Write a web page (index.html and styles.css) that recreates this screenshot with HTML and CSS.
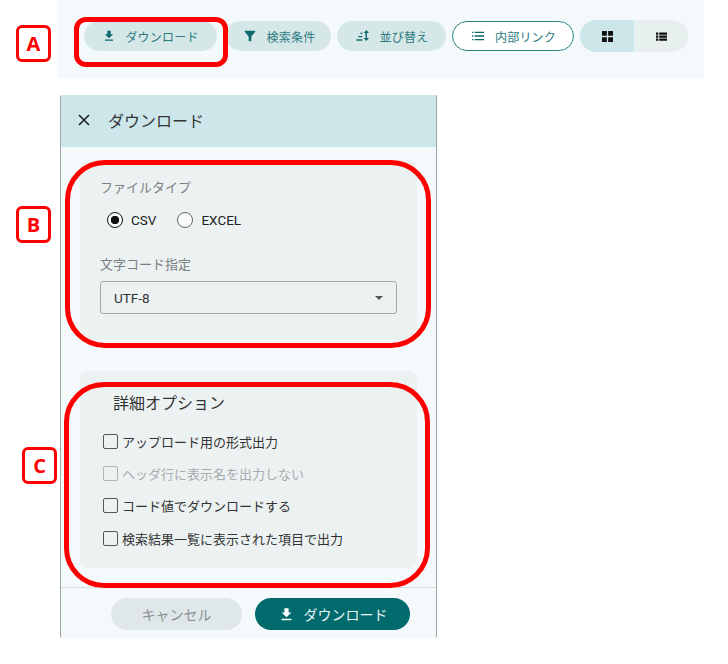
FILE: index.html
```html
<!DOCTYPE html>
<html lang="ja">
<head>
<meta charset="utf-8">
<title>ダウンロード</title>
<link rel="stylesheet" href="styles.css">
</head>
<body>
<div class="page">
  <div class="toolbar">
    <button class="tbtn tbtn-dl"><svg class="ic" viewBox="0 0 24 24"><path d="M19 9h-4V3H9v6H5l7 7 7-7zM5 18v2h14v-2H5z"/></svg><span>ダウンロード</span></button>
    <button class="tbtn tbtn-search"><svg class="ic ic-l" viewBox="0 0 24 24"><path d="M4.2 5.6C6.2 8.2 10 13 10 13v6c0 .6.4 1 1 1h2c.6 0 1-.4 1-1v-6s3.700-4.800 5.800-7.400c.5-.7 0-1.600-.8-1.600H5c-.8 0-1.300.9-.8 1.600z"/></svg><span>検索条件</span></button>
    <button class="tbtn tbtn-sort"><svg class="ic ic-l" viewBox="0 0 24 24"><path d="M2 17h9v2H2zM5 12h6v2H5zM8 7h3v2H8zM16 5.500h2V15h3l-4 4.500-4-4.500h3z" transform="translate(0 0)"/><path d="M17 3l4 4.500h-3V12h-2V7.500h-3z"/></svg><span>並び替え</span></button>
    <button class="tbtn tbtn-link"><svg class="ic ic-l" viewBox="0 0 24 24"><path d="M3 5.500h2v2H3zM3 11h2v2H3zM3 16.500h2v2H3zM7 5.500h14v2H7zM7 11h14v2H7zM7 16.500h14v2H7z"/></svg><span>内部リンク</span></button>
    <div class="toggle">
      <div class="tog tog-on"><svg class="ic-tog" viewBox="0 0 12 12"><path d="M0 0h5.300v5.300H0zM6.700 0H12v5.300H6.700zM0 6.700h5.300V12H0zM6.700 6.700H12V12H6.700z"/></svg></div>
      <div class="tog"><svg class="ic-tog" viewBox="0 0 12 12"><path d="M0 1.500h2.500v2.500H0zM3.500 1.500H12v2.500H3.500zM0 4.800h2.500v2.500H0zM3.500 4.800H12v2.500H3.500zM0 8.100h2.500v2.500H0zM3.500 8.100H12v2.500H3.500z"/></svg></div>
    </div>
  </div>

  <div class="panel">
    <div class="phead">
      <svg class="close" viewBox="0 0 12 12"><path d="M1 1l10 10M11 1L1 11"/></svg>
      <span class="ptitle">ダウンロード</span>
    </div>
    <div class="pbody">
      <section class="card card-b">
        <div class="label">ファイルタイプ</div>
        <div class="radios">
          <div class="radio"><span class="rmark rmark-on"></span><span>CSV</span></div>
          <div class="radio"><span class="rmark"></span><span>EXCEL</span></div>
        </div>
        <div class="label label-2">文字コード指定</div>
        <div class="select"><span>UTF-8</span><span class="caret"></span></div>
      </section>
      <section class="card card-c">
        <div class="ctitle">詳細オプション</div>
        <div class="check"><span class="box"></span><span>アップロード用の形式出力</span></div>
        <div class="check check-off"><span class="box"></span><span>ヘッダ行に表示名を出力しない</span></div>
        <div class="check"><span class="box"></span><span>コード値でダウンロードする</span></div>
        <div class="check"><span class="box"></span><span>検索結果一覧に表示された項目で出力</span></div>
      </section>
    </div>
    <div class="pfoot">
      <button class="fbtn fbtn-cancel">キャンセル</button>
      <button class="fbtn fbtn-dl"><svg class="ic-f" viewBox="0 0 24 24"><path d="M19 9h-4V3H9v6H5l7 7 7-7zM5 18v2h14v-2H5z"/></svg><span>ダウンロード</span></button>
    </div>
  </div>

  <div class="mark mark-a">A</div>
  <div class="mark mark-b">B</div>
  <div class="mark mark-c">C</div>
  <div class="ring ring-a"></div>
  <div class="ring ring-b"></div>
  <div class="ring ring-c"></div>
</div>
</body>
</html>
```
FILE: styles.css
```css
* { box-sizing: border-box; }
html, body { margin: 0; padding: 0; background: #fff; }
body { font-family: Roboto, "Noto Sans CJK JP", sans-serif; }
.page { position: relative; width: 728px; height: 664px; overflow: hidden; padding-left: 57px; }

.toolbar { width: 647px; height: 78px; background: #f4f9fb; display: flex; align-items: center; padding-left: 27px; padding-bottom: 6px; }
button { font-family: inherit; border: 0; padding: 0; }
.tbtn { height: 30px; border-radius: 15px; background: #d5e8e7; color: #2a7a80; font-size: 12px; display: flex; align-items: center; justify-content: center; gap: 9px; letter-spacing: .2px; }
.tbtn-dl { width: 133px; margin-right: 9px; }
.tbtn-search { width: 105px; margin-right: 6px; }
.tbtn-sort { width: 109px; margin-right: 6px; }
.tbtn-link { width: 122px; margin-right: 6px; background: #fff; border: 1px solid #2c868c; }
.ic { width: 14px; height: 14px; fill: #0f6a70; flex: none; }
.ic-l { width: 16px; height: 16px; }
.toggle { display: flex; width: 108px; height: 32px; border-radius: 16px; overflow: hidden; }
.tog { flex: 1; display: flex; align-items: center; justify-content: center; background: #e8efef; }
.tog-on { background: #cde6e9; }
.ic-tog { width: 11px; height: 11px; fill: #111; }

.panel { width: 377px; height: 543px; margin: 17px 0 0 3px; background: #f4f9fb; border: 1px solid #a0a5a8; border-bottom: 0; border-radius: 2px; display: flex; flex-direction: column; }
.phead { height: 52px; flex: none; background: #cde6e9; display: flex; align-items: center; padding-left: 17px; gap: 18px; margin-top: -1px; padding-bottom: 3px; }
.close { width: 12px; height: 12px; fill: none; stroke: #222; stroke-width: 1.600; }
.ptitle { font-size: 16px; color: #333; }
.pbody { flex: 1; padding: 13px 19px 0; display: flex; flex-direction: column; gap: 31px; }
.card { background: #ecf2f2; border-radius: 8px; }
.card-b { height: 180px; padding: 19px 20px 0; }
.label { font-size: 13px; color: #7c8082; line-height: 18px; }
.radios { display: flex; gap: 21px; margin-top: 14px; padding-left: 7px; height: 18px; align-items: center; }
.radio { display: flex; align-items: center; gap: 8px; font-size: 13.500px; color: #222; }
.rmark { width: 16px; height: 16px; border: 1.500px solid #666; border-radius: 50%; display: block; background: #f8fafa; }
.rmark-on { border-color: #111; background: radial-gradient(circle, #111 0 4px, #f8fafa 4.500px); }
.label-2 { margin-top: 27px; }
.select { margin-top: 7px; height: 33px; width: 297px; border: 1px solid #a4a9aa; border-radius: 3px; display: flex; align-items: center; justify-content: space-between; padding: 0 13px; font-size: 13.500px; color: #333; }
.caret { width: 0; height: 0; border-left: 4.500px solid transparent; border-right: 4.500px solid transparent; border-top: 4.500px solid #555; }
.card-c { height: 197px; padding: 21px 23px 0; }
.ctitle { font-size: 16px; color: #333; line-height: 24px; padding-left: 10px; margin-bottom: 9px; }
.check { display: flex; align-items: center; gap: 4px; height: 32.300px; font-size: 13px; color: #333; }
.box { width: 15px; height: 15px; border: 1.500px solid #555; border-radius: 2px; flex: none; }
.check-off { color: #a8acae; }
.check-off .box { border-color: #b0b4b5; }
.pfoot { height: 51px; flex: none; border-top: 1px solid #d8dcdd; display: flex; gap: 13px; padding: 10px 0 0 50px; align-items: flex-start; }
.fbtn { height: 32px; border-radius: 16px; font-size: 14px; display: flex; align-items: center; justify-content: center; }
.fbtn-cancel { width: 131px; background: #dfe7e8; color: #8a8f92; }
.fbtn-dl { width: 155px; background: #006a6c; color: #e8f4f4; gap: 9px; }
.ic-f { width: 17px; height: 17px; fill: #fff; }

.mark { position: absolute; width: 35px; height: 37px; border: 3px solid #f00; border-radius: 6px; background: #fff; color: #f00; font: bold 20px/31px "Open Sans", sans-serif; text-align: center; }
.mark-a { left: 16px; top: 25px; }
.mark-b { left: 16px; top: 206px; }
.mark-c { left: 22px; top: 447px; }
.ring { position: absolute; border: 5px solid #f00; }
.ring-a { left: 74px; top: 17px; width: 154px; height: 50px; border-radius: 12px; }
.ring-b { left: 65px; top: 160px; width: 366px; height: 188px; border-radius: 40px; }
.ring-c { left: 64px; top: 382px; width: 366px; height: 206px; border-radius: 40px; }
```
